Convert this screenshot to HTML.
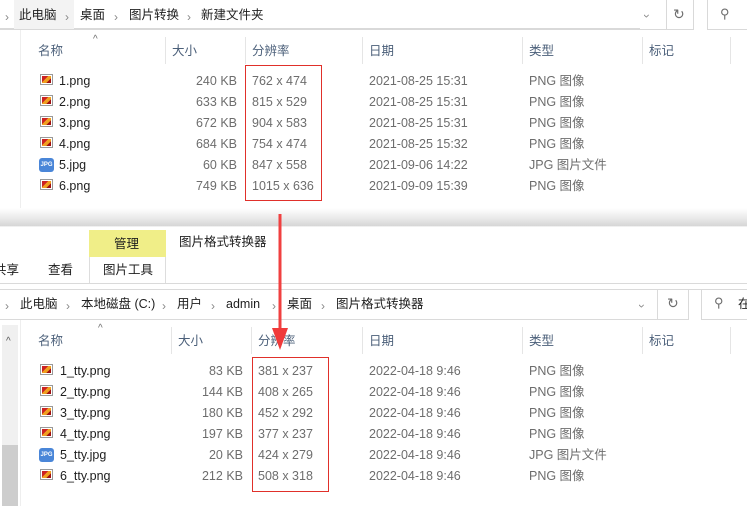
<!DOCTYPE html>
<html><head><meta charset="utf-8"><style>
*{margin:0;padding:0;box-sizing:border-box}
body{width:747px;height:506px;overflow:hidden;background:#fff;position:relative;font-family:"Liberation Sans","Noto Sans CJK SC",sans-serif;font-size:12.5px;color:#1e1e1e}
.a{position:absolute;white-space:nowrap;line-height:16px}
.g{color:#6d6d6d}
.h{color:#4c607a}
.vl{position:absolute;width:1px;background:#e5e5e5}
.box{position:absolute;border:1px solid #e5e5e5;background:#fff}
.red{position:absolute;border:1px solid #e0302a}
.ic{position:absolute;width:13px;height:11px;border:1px solid #999;background:#fff}
.ic::after{content:"";position:absolute;left:1px;top:1px;width:9px;height:7px;background:linear-gradient(135deg,#c22 0 40%,#f0a020 40% 70%,#a01010 70%)}
.jp{position:absolute;width:15px;height:14px;border-radius:3px;background:#4a86d8;color:#fff;font-size:6px;font-weight:bold;line-height:14px;text-align:center}
.chev{color:#888;font-size:12px}
</style></head><body>
<div class="a" style="left:0;top:0;width:640px;height:29px;border-bottom:1px solid #d9d9d9"></div>
<div class="a" style="left:14px;top:0;width:60px;height:29px;background:#f3f3f3"></div>
<div class="a chev" style="left:5px;top:9px">›</div>
<div class="a" style="left:19px;top:7px">此电脑</div>
<div class="a chev" style="left:65px;top:9px">›</div>
<div class="a" style="left:80px;top:7px">桌面</div>
<div class="a chev" style="left:114px;top:9px">›</div>
<div class="a" style="left:129px;top:7px">图片转换</div>
<div class="a chev" style="left:187px;top:9px">›</div>
<div class="a" style="left:201px;top:7px">新建文件夹</div>
<div class="a" style="left:640px;top:-1px;width:27px;height:30px;border-right:1px solid #d9d9d9"></div>
<div class="a" style="left:0;top:29px;width:694px;height:1px;background:#d9d9d9"></div>
<div class="a chev" style="left:645px;top:8px;transform:rotate(90deg)">›</div>
<div class="a" style="left:693px;top:-1px;width:1px;height:31px;background:#d9d9d9"></div>
<div class="a g" style="left:673px;top:6px;font-size:14px">↻</div>
<div class="box" style="left:707px;top:-1px;width:45px;height:31px;border-color:#d9d9d9"></div>
<div class="a g" style="left:720px;top:6px;font-size:13px;transform:scaleX(-1)">⚲</div>
<div class="vl" style="left:20px;top:30px;height:190px;background:#eee"></div>

<div class="a g" style="left:93px;top:32px;font-size:10px">^</div>
<div class="a h" style="left:38px;top:43px">名称</div>
<div class="vl" style="left:165px;top:37px;height:27px"></div>
<div class="a h" style="left:172px;top:43px">大小</div>
<div class="vl" style="left:245px;top:37px;height:27px"></div>
<div class="a h" style="left:252px;top:43px">分辨率</div>
<div class="vl" style="left:362px;top:37px;height:27px"></div>
<div class="a h" style="left:369px;top:43px">日期</div>
<div class="vl" style="left:522px;top:37px;height:27px"></div>
<div class="a h" style="left:529px;top:43px">类型</div>
<div class="vl" style="left:642px;top:37px;height:27px"></div>
<div class="a h" style="left:649px;top:43px">标记</div>
<div class="vl" style="left:730px;top:37px;height:27px"></div>

<div class="red" style="left:245px;top:65px;width:77px;height:136px"></div>
<div id="top"></div>

<div class="a" style="left:0;top:208px;width:747px;height:18px;background:linear-gradient(#fff,#e8e8e8 60%,#d6d6d6)"></div>
<div class="a" style="left:0;top:226px;width:747px;height:1px;background:#f0f0f0"></div>

<div class="a" style="left:89px;top:230px;width:77px;height:27px;background:#f0ee88"></div>
<div class="a" style="left:114px;top:236px">管理</div>
<div class="a" style="left:179px;top:234px">图片格式转换器</div>
<div class="a" style="left:-6px;top:262px">共享</div>
<div class="a" style="left:48px;top:262px">查看</div>
<div class="a" style="left:89px;top:257px;width:77px;height:27px;border-left:1px solid #ddd;border-right:1px solid #ddd"></div>
<div class="a" style="left:103px;top:262px">图片工具</div>
<div class="a" style="left:0;top:283px;width:747px;height:1px;background:#dadada"></div>

<div class="a" style="left:0;top:289px;width:747px;height:1px;background:#dadada"></div>
<div class="a" style="left:0;top:319px;width:689px;height:1px;background:#dadada"></div>
<div class="a chev" style="left:5px;top:298px">›</div>
<div class="a" style="left:20px;top:296px">此电脑</div>
<div class="a chev" style="left:66px;top:298px">›</div>
<div class="a" style="left:81px;top:296px">本地磁盘 (C:)</div>
<div class="a chev" style="left:162px;top:298px">›</div>
<div class="a" style="left:177px;top:296px">用户</div>
<div class="a chev" style="left:211px;top:298px">›</div>
<div class="a" style="left:226px;top:296px">admin</div>
<div class="a chev" style="left:272px;top:298px">›</div>
<div class="a" style="left:287px;top:296px">桌面</div>
<div class="a chev" style="left:321px;top:298px">›</div>
<div class="a" style="left:336px;top:296px">图片格式转换器</div>
<div class="a chev" style="left:640px;top:298px;transform:rotate(90deg)">›</div>
<div class="a" style="left:657px;top:289px;width:1px;height:31px;background:#dadada"></div>
<div class="a" style="left:688px;top:289px;width:1px;height:31px;background:#dadada"></div>
<div class="a g" style="left:667px;top:295px;font-size:14px">↻</div>
<div class="box" style="left:701px;top:289px;width:50px;height:31px;border-color:#d9d9d9"></div>
<div class="a g" style="left:714px;top:295px;font-size:13px;transform:scaleX(-1)">⚲</div>
<div class="a" style="left:738px;top:296px">在</div>

<div class="a" style="left:2px;top:325px;width:16px;height:181px;background:#f0f0f0"></div>
<div class="a" style="left:2px;top:445px;width:16px;height:61px;background:#cdcdcd"></div>
<div class="a g" style="left:6px;top:334px;font-size:10px;color:#555">^</div>
<div class="vl" style="left:20px;top:320px;height:186px;background:#eee"></div>

<div class="a g" style="left:98px;top:321px;font-size:10px">^</div>
<div class="a h" style="left:38px;top:333px">名称</div>
<div class="vl" style="left:171px;top:327px;height:27px"></div>
<div class="a h" style="left:178px;top:333px">大小</div>
<div class="vl" style="left:251px;top:327px;height:27px"></div>
<div class="a h" style="left:258px;top:333px">分辨率</div>
<div class="vl" style="left:362px;top:327px;height:27px"></div>
<div class="a h" style="left:369px;top:333px">日期</div>
<div class="vl" style="left:522px;top:327px;height:27px"></div>
<div class="a h" style="left:529px;top:333px">类型</div>
<div class="vl" style="left:642px;top:327px;height:27px"></div>
<div class="a h" style="left:649px;top:333px">标记</div>
<div class="vl" style="left:730px;top:327px;height:27px"></div>

<div class="red" style="left:252px;top:357px;width:77px;height:135px"></div>
<div id="bot"></div>

<svg class="a" style="left:268px;top:210px" width="24" height="145"><line x1="12" y1="4" x2="12" y2="125" stroke="#f04040" stroke-width="3"/><polygon points="4,118 20,118 12,140" fill="#f03a3a"/></svg>

<script>
function rows(id,data,y0,nx,sizeR,dx){var h="";data.forEach(function(d,i){var y=y0+i*21;
h+=(d[0].indexOf("jpg")>0?'<div class="jp" style="left:39px;top:'+(y+1)+'px">JPG</div>':'<div class="ic" style="left:40px;top:'+(y+1)+'px"></div>');
h+='<div class="a" style="left:'+nx+'px;top:'+y+'px">'+d[0]+'</div>';
h+='<div class="a g" style="right:'+(747-sizeR)+'px;top:'+y+'px">'+d[1]+'</div>';
h+='<div class="a g" style="left:'+dx+'px;top:'+y+'px">'+d[2]+'</div>';
h+='<div class="a g" style="left:369px;top:'+y+'px">'+d[3]+'</div>';
h+='<div class="a g" style="left:529px;top:'+y+'px">'+(d[0].indexOf("jpg")>0?"JPG 图片文件":"PNG 图像")+'</div>';});
document.getElementById(id).outerHTML=h;}
rows("top",[["1.png","240 KB","762 x 474","2021-08-25 15:31"],["2.png","633 KB","815 x 529","2021-08-25 15:31"],["3.png","672 KB","904 x 583","2021-08-25 15:31"],["4.png","684 KB","754 x 474","2021-08-25 15:32"],["5.jpg","60 KB","847 x 558","2021-09-06 14:22"],["6.png","749 KB","1015 x 636","2021-09-09 15:39"]],73,59,237,252);
rows("bot",[["1_tty.png","83 KB","381 x 237","2022-04-18 9:46"],["2_tty.png","144 KB","408 x 265","2022-04-18 9:46"],["3_tty.png","180 KB","452 x 292","2022-04-18 9:46"],["4_tty.png","197 KB","377 x 237","2022-04-18 9:46"],["5_tty.jpg","20 KB","424 x 279","2022-04-18 9:46"],["6_tty.png","212 KB","508 x 318","2022-04-18 9:46"]],363,60,243,258);
</script>
</body></html>
